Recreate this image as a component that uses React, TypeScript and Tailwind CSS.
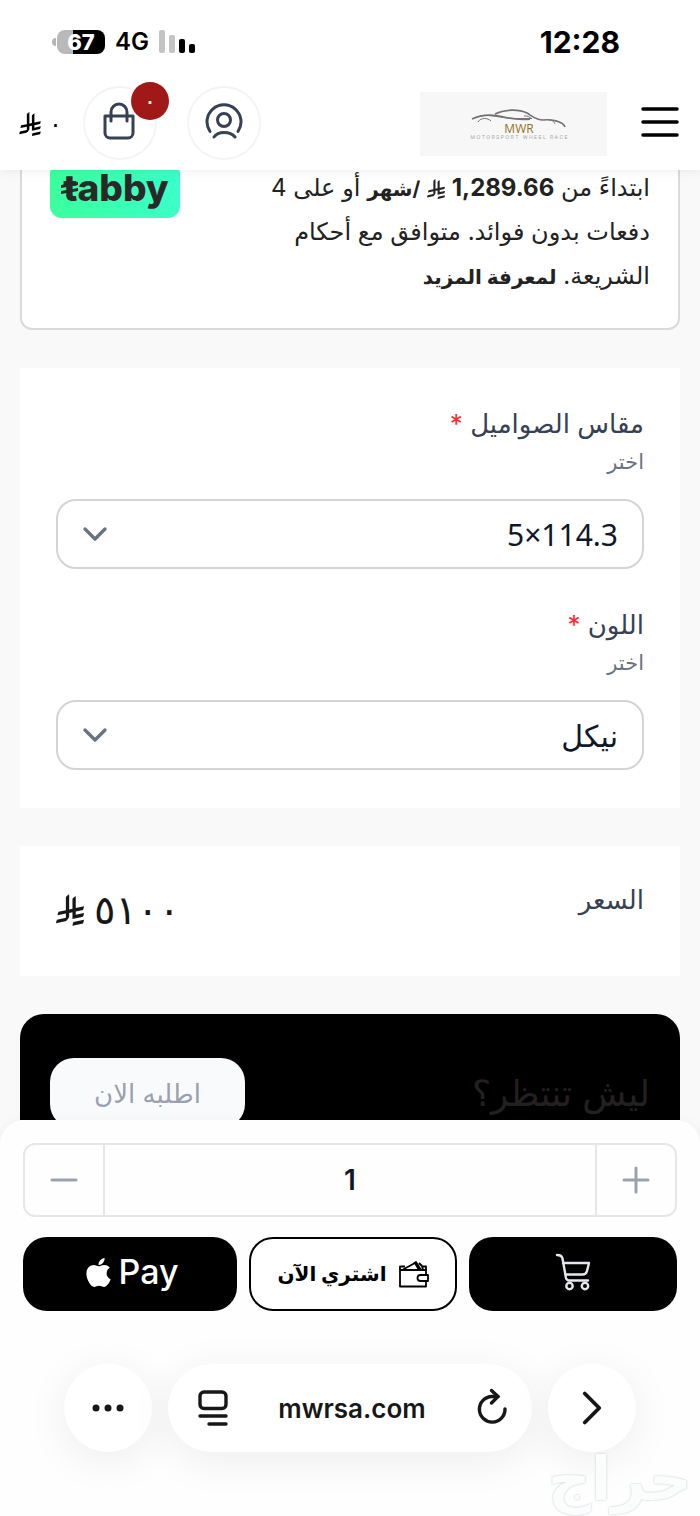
import { useState } from 'react'
import { ChevronDown, ChevronRight } from 'lucide-react'
import { FaApple } from 'react-icons/fa'

interface OptionField {
  id: string
  label: string
  hint: string
  values: string[]
  dir: 'rtl' | 'ltr'
}

const fields: OptionField[] = [
  { id: 'bolt-size', label: 'مقاس الصواميل', hint: 'اختر', values: ['5×114.3'], dir: 'ltr' },
  { id: 'color', label: 'اللون', hint: 'اختر', values: ['نيكل'], dir: 'rtl' },
]

function Riyal({ className }: { className: string }) {
  return (
    <svg viewBox="0 0 1124.14 1256.39" fill="currentColor" className={className} aria-hidden="true">
      <path d="M699.62 1113.02c-20.06 44.48-33.32 92.75-38.4 143.37l424.51-90.24c20.06-44.47 33.31-92.75 38.4-143.37l-424.51 90.24Z" />
      <path d="M1085.73 895.8c20.06-44.47 33.32-92.75 38.4-143.37l-330.68 70.33v-135.2l292.27-62.11c20.06-44.47 33.32-92.75 38.4-143.37l-330.68 70.27V66.13c-50.67 28.45-95.67 66.32-132.25 110.99v403.35l-132.25 28.11V0c-50.67 28.44-95.67 66.32-132.25 110.99v525.69l-295.91 62.88c-20.06 44.47-33.33 92.75-38.42 143.37l334.33-71.05v170.26l-358.3 76.14c-20.06 44.47-33.32 92.75-38.4 143.37l375.04-79.7c30.53-6.35 56.77-24.4 73.83-49.24l68.78-101.97c7.14-10.55 11.3-23.29 11.3-36.99V743.88l132.25-28.11v270.4l424.53-90.37Z" />
    </svg>
  )
}

function StatusBar() {
  return (
    <div className="flex h-21 items-center justify-between pr-20 pl-13 text-black">
      <div className="flex items-center gap-2.5">
        <div className="flex items-center gap-px">
          <span className="h-2 w-1 rounded-l-full bg-[#b5b5b5]" />
          <span className="flex h-6 w-12 items-center justify-center rounded-lg bg-linear-to-r from-[#b9b9b9] from-33% to-black to-33% text-[22px] font-extrabold text-white">
            67
          </span>
        </div>
        <span className="text-2xl font-semibold">4G</span>
        <svg viewBox="0 0 36 24" className="h-6 w-9" aria-hidden="true">
          <rect x="0" y="0" width="6" height="23" rx="2" fill="#c4c4c4" />
          <rect x="10" y="5" width="6" height="18" rx="2" fill="#c4c4c4" />
          <rect x="20" y="9" width="6" height="14" rx="2" />
          <rect x="30" y="14" width="6" height="9" rx="2" />
        </svg>
      </div>
      <span className="text-[30px] font-bold">12:28</span>
    </div>
  )
}

function BrandLogo() {
  return (
    <a href="#" aria-label="MWR" className="flex h-16 w-[187px] items-center justify-center bg-[#f7f7f7]">
      <svg viewBox="0 0 187 64" className="h-16 w-full" fill="none" stroke="#737373">
        <path d="M52 27c8-4 20-5 32-2 8 2 14 3 26 2" strokeWidth="1.8" />
        <path d="M60 24c10-2 20 2 32 2.500h19" strokeWidth="1" />
        <path d="M75 22c10-5 24-5 32-1 5 3 9 7 16 7 7-1 20 1 22 7" strokeWidth="1.6" />
        <path d="M104 24c3-.5 6 1 8 3" strokeWidth="1" />
        <path d="M58 30c3-5 10-4 13-1M129 28c4 0 5 2 6 4" strokeWidth="1" />
        <text x="99" y="41" textAnchor="middle" fontSize="12" fontFamily="Open Sans, sans-serif" fill="#94731f" stroke="none">
          MWR
        </text>
        <text x="99" y="47" textAnchor="middle" fontSize="5" textRendering="geometricPrecision" fill="#a5a5a5" stroke="none">
          M O T O R S P O R T &nbsp; W H E E L &nbsp; R A C E
        </text>
      </svg>
    </a>
  )
}

function Header() {
  return (
    <header className="relative z-10 shrink-0 bg-white shadow-[0_2px_10px_rgba(0,0,0,0.06)]">
      <StatusBar />
      <div className="flex h-[86px] items-start justify-between pr-5 pl-[19px]">
        <div className="flex items-center">
          <span className="flex w-16 items-center gap-2 pt-1 text-2xl text-black">
            <Riyal className="h-6 w-[22px]" />
            <span>٠</span>
          </span>
          <button type="button" aria-label="السلة" className="relative mt-0.5 flex size-[74px] items-center justify-center rounded-full border-2 border-gray-100 pr-0.5 pb-1 text-gray-700">
            <svg viewBox="0 0 32 38" className="h-[38px] w-8" fill="none" stroke="currentColor" strokeWidth="3" strokeLinecap="round" strokeLinejoin="round">
              <path d="M2 14h28v17a5 5 0 0 1-5 5H7a5 5 0 0 1-5-5Z" />
              <path d="M8 19V10a8 8 0 0 1 16 0v9" />
            </svg>
            <span className="absolute -top-1.5 -right-3.5 flex size-[38px] items-center justify-center rounded-full bg-[#a01818] text-2xl text-white">
              ٠
            </span>
          </button>
          <button type="button" aria-label="حسابي" className="mt-0.5 ml-[30px] flex size-[74px] items-center justify-center rounded-full border-2 border-gray-100 pb-1 text-gray-700">
            <svg viewBox="0 0 38 36" className="h-9 w-[38px]" fill="none" stroke="currentColor" strokeWidth="3" strokeLinecap="round">
              <path d="M5 28.500A17 17 0 1 1 33 28.500" />
              <circle cx="19" cy="17" r="6.500" />
              <path d="M9 34c4-6 16-6 21 0" />
            </svg>
          </button>
        </div>
        <div className="mt-2 flex items-center gap-[33px]">
          <BrandLogo />
          <button type="button" aria-label="القائمة" className="pb-1 text-black">
            <svg viewBox="0 0 40 34" className="h-[34px] w-10" stroke="currentColor" strokeWidth="3.500" strokeLinecap="round">
              <path d="M3 4h34M3 17h34M3 30h34" />
            </svg>
          </button>
        </div>
      </div>
    </header>
  )
}

function TabbyCard() {
  return (
    <section className="-mt-10 flex items-start justify-between rounded-xl border-2 border-[#dadada] bg-white px-7 py-[30px]">
      <p className="w-[390px] pt-1 text-2xl leading-[44px] text-[#222]">
        ابتداءً من <b dir="ltr" className="leading-none">1,289.66</b> <Riyal className="inline h-5 w-[18px]" />{' '}
        <b className="text-xl leading-none">/شهر</b> أو على 4 دفعات بدون فوائد. متوافق مع أحكام الشريعة.{' '}
        <a href="#" className="text-xl leading-none font-bold">لمعرفة المزيد</a>
      </p>
      <div dir="ltr" className="h-14 w-[130px] rounded-xl bg-linear-to-r from-[#3bff9d] to-[#3bffc8]">
        <svg viewBox="0 0 130 56" className="h-14 w-full" fill="#292929">
          <text x="66" y="39" textAnchor="middle" fontSize="37" fontWeight="800">
            tabby
          </text>
          <path d="M11 23l17-3v3l-17 3zM11 29l17-3v3l-17 3z" />
        </svg>
      </div>
    </section>
  )
}

function OptionSelect({ field }: { field: OptionField }) {
  return (
    <div>
      <label htmlFor={field.id} className="block text-[26px] leading-9 text-gray-700">
        {field.label} <span className="text-red-500">*</span>
      </label>
      <p className="mt-1.5 text-[21px] leading-7 text-gray-500">{field.hint}</p>
      <div className="relative mt-[23px]">
        <select
          id={field.id}
          dir={field.dir}
          className="h-[70px] w-full appearance-none rounded-[20px] border-2 border-[#d4d4d4] bg-white px-6 font-['Noto_Sans','DejaVu_Sans',sans-serif] text-[30px] text-gray-900 [text-align-last:right]"
        >
          {field.values.map((value) => (
            <option key={value}>{value}</option>
          ))}
        </select>
        <ChevronDown size={40} className="pointer-events-none absolute top-[15px] left-[19px] text-gray-500" />
      </div>
    </div>
  )
}

function Checkout() {
  const [quantity, setQuantity] = useState(1)

  return (
    <div className="px-[23px] pt-[23px]">
      <div className="flex h-[74px] rounded-xl border-2 border-gray-200">
        <button type="button" aria-label="إنقاص" onClick={() => setQuantity(Math.max(1, quantity - 1))} className="flex w-20 items-center justify-center border-r-2 border-gray-200 text-gray-400">
          <svg viewBox="0 0 28 28" className="size-7" stroke="currentColor" strokeWidth="3" strokeLinecap="round">
            <path d="M2 14h24" />
          </svg>
        </button>
        <input
          aria-label="الكمية"
          value={quantity}
          onChange={(e) => setQuantity(Number(e.target.value) || 1)}
          className="min-w-0 flex-1 text-center text-[28px] font-semibold text-gray-900"
        />
        <button type="button" aria-label="زيادة" onClick={() => setQuantity(quantity + 1)} className="flex w-20 items-center justify-center border-l-2 border-gray-200 text-gray-400">
          <svg viewBox="0 0 28 28" className="size-7" stroke="currentColor" strokeWidth="3" strokeLinecap="round">
            <path d="M2 14h24M14 2v24" />
          </svg>
        </button>
      </div>

      <div className="mt-5 grid grid-cols-[214fr_208fr_208fr] gap-3">
        <button type="button" className="flex h-[74px] items-center justify-center gap-1 rounded-3xl bg-black pb-1 text-white">
          <FaApple size={33} />
          <span className="text-[34px] leading-none font-medium">Pay</span>
        </button>
        <button type="button" className="flex h-[74px] items-center justify-center gap-3 rounded-3xl border-2 border-black bg-white text-black">
          <span className="text-xl font-bold">اشتري الآن</span>
          <svg viewBox="0 0 30 27" className="h-[27px] w-[30px]" fill="none" stroke="currentColor" strokeWidth="1.800" strokeLinejoin="round">
            <path d="M27 14V9H1v16.500h26V20" />
            <path d="M1 9V5.500h5M27 9V5.500h-3" />
            <path d="M4 8.500L16 2l4 7M14 3l3-2 5 8M20 2l3 3 1 4" />
            <path d="M29 14h-7.500a3 3 0 0 0 0 6H29Z" />
          </svg>
        </button>
        <button type="button" aria-label="أضف للسلة" className="flex h-[74px] items-center justify-center rounded-3xl bg-black pb-1 text-gray-200">
          <svg viewBox="0 0 36 38" className="h-[38px] w-9" fill="none" stroke="currentColor" strokeWidth="2.400" strokeLinecap="round" strokeLinejoin="round">
            <path d="M2 2c3 0 5 1 5.500 3.500L11 25c.5 2 1.500 2.500 3.500 2.500H33" />
            <path d="M8 10h26l-2 8c-.6 2.500-2 3.500-4.500 3.500H10.500" />
            <circle cx="14.500" cy="33" r="3.200" />
            <circle cx="30" cy="33" r="3.200" />
          </svg>
        </button>
      </div>
    </div>
  )
}

function BrowserBar() {
  return (
    <nav className="mt-[53px] flex items-center gap-4 px-16 pb-16 text-neutral-900">
      <button type="button" aria-label="المزيد" className="flex size-[88px] shrink-0 items-center justify-center rounded-full bg-white shadow-[0_8px_44px_rgba(0,0,0,0.07)]">
        <svg viewBox="0 0 32 8" className="h-2 w-8" fill="currentColor">
          <circle cx="4" cy="4" r="3.500" />
          <circle cx="16" cy="4" r="3.500" />
          <circle cx="28" cy="4" r="3.500" />
        </svg>
      </button>
      <div className="flex h-[88px] flex-1 items-center justify-between rounded-full bg-white pr-6 pl-[30px] shadow-[0_8px_44px_rgba(0,0,0,0.07)]">
        <button type="button" aria-label="إعدادات الصفحة">
          <svg viewBox="0 0 30 36" className="h-9 w-[30px]" fill="none" stroke="currentColor" strokeWidth="3.400" strokeLinecap="round">
            <rect x="2" y="2" width="26" height="16.500" rx="4" />
            <path d="M2 26h26M11 34h17" />
          </svg>
        </button>
        <span className="text-[26px] font-semibold">mwrsa.com</span>
        <button type="button" aria-label="تحديث" className="pb-1">
          <svg viewBox="0 0 32 36" className="h-9 w-8" fill="none" stroke="currentColor" strokeWidth="3.400" strokeLinecap="round" strokeLinejoin="round">
            <path d="M29 21A12.800 12.800 0 1 1 16 8.500h6" />
            <path d="M15.500 2.500l6.500 6-6.500 6.500" />
          </svg>
        </button>
      </div>
      <button type="button" aria-label="التالي" className="flex size-[88px] shrink-0 items-center justify-center rounded-full bg-white shadow-[0_8px_44px_rgba(0,0,0,0.07)]">
        <ChevronRight size={58} strokeWidth={1.6} />
      </button>
    </nav>
  )
}

export default function App() {
  return (
    <div className="flex h-screen flex-col overflow-hidden bg-[#f9f9fa] font-[Inter,'Noto_Sans','DejaVu_Sans',sans-serif]">
      <Header />

      <main dir="rtl" className="flex min-h-0 flex-1 flex-col gap-[38px] overflow-hidden px-5">
        <TabbyCard />

        <section className="flex flex-col gap-[38px] bg-white px-9 py-[38px]">
          {fields.map((field) => (
            <OptionSelect key={field.id} field={field} />
          ))}
        </section>

        <section className="flex h-[130px] shrink-0 items-start justify-between bg-white px-9 pt-9">
          <h2 className="text-[26px] leading-9 text-gray-700">السعر</h2>
          <p dir="ltr" className="flex h-14 items-center gap-2.5 text-[40px] text-neutral-900">
            <Riyal className="h-8 w-7" />
            <span dir="rtl">٥١٠٠</span>
          </p>
        </section>

        <section className="flex shrink-0 items-start justify-between rounded-t-3xl bg-black px-7.5 pt-11 pb-11">
          <h2 className="text-4xl leading-[70px] text-[#242021]">ليش تنتظر؟</h2>
          <button type="button" className="h-[70px] w-[195px] rounded-3xl bg-[#f9fafb] text-[26px] text-gray-400">
            اطلبه الان
          </button>
        </section>
      </main>

      <footer className="relative z-10 shrink-0 rounded-t-3xl bg-[#fefefe] shadow-[0_0_12px_rgba(0,0,0,0.04)]">
        <Checkout />
        <BrowserBar />
        <span
          dir="rtl"
          className="absolute right-2 bottom-2 text-6xl leading-[60px] font-bold text-[#fbfcfc] [text-shadow:0_0_2px_#b8c0c6]"
        >
          حراج
        </span>
      </footer>
    </div>
  )
}
